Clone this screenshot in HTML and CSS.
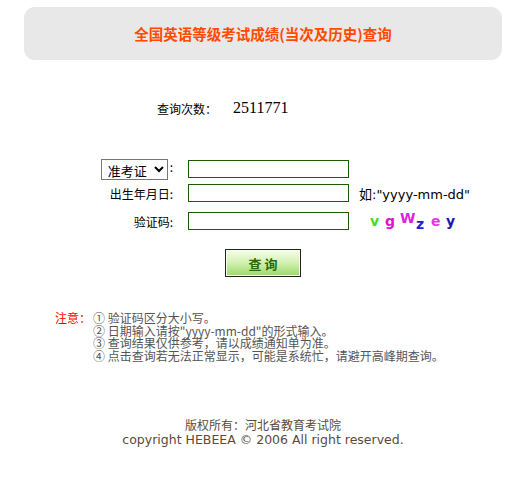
FILE: index.html
```html
<!DOCTYPE html>
<html>
<head>
<meta charset="utf-8">
<link rel="stylesheet" href="styles.css">
</head>
<body>
<div class="page">
  <div class="header">全国英语等级考试成绩(当次及历史)查询</div>
  <div class="count">
    <span class="count-label">查询次数：</span>
    <span class="count-num">2511771</span>
  </div>
  <table class="form">
    <tr class="row1">
      <td class="lab"><select class="sel"><option>准考证</option></select>:</td>
      <td class="inp"><input class="box" type="text"></td>
      <td class="hint"></td>
    </tr>
    <tr class="row2">
      <td class="lab">出生年月日:</td>
      <td class="inp"><input class="box" type="text"></td>
      <td class="hint">如:"yyyy-mm-dd"</td>
    </tr>
    <tr class="row3">
      <td class="lab">验证码:</td>
      <td class="inp"><input class="box" type="text"></td>
      <td class="hint"><span class="captcha"><span class="c1">v</span><span class="c2">g</span><span class="c3">W</span><span class="c4">z</span><span class="c5">e</span><span class="c6">y</span></span></td>
    </tr>
  </table>
  <div class="btnrow"><button class="btn">查 询</button></div>
  <div class="notes">
    <div class="note-head">注意：</div>
    <div class="note-list">
      <div>① 验证码区分大小写。</div>
      <div>② 日期输入请按"yyyy-mm-dd"的形式输入。</div>
      <div>③ 查询结果仅供参考，请以成绩通知单为准。</div>
      <div>④ 点击查询若无法正常显示，可能是系统忙，请避开高峰期查询。</div>
    </div>
  </div>
  <div class="footer">
    <div>版权所有：河北省教育考试院</div>
    <div>copyright HEBEEA © 2006 All right reserved.</div>
  </div>
</div>
</body>
</html>
```
FILE: styles.css
```css
html, body {
  margin: 0;
  padding: 0;
  background: #fff;
}
body {
  font-family: "DejaVu Sans", "Noto Sans CJK SC", sans-serif;
  font-size: 12px;
  color: #000;
}
.page {
  width: 478px;
  margin-left: 24px;
  padding-top: 7px;
}
.header {
  height: 53px;
  background: #e8e8e8;
  border-radius: 11px;
  display: flex;
  align-items: center;
  justify-content: center;
  color: #ff4a00;
  font-family: "Noto Sans CJK SC", sans-serif;
  font-weight: bold;
  font-size: 14.5px;
}
.count {
  margin-top: 38px;
  display: flex;
  align-items: center;
  padding-left: 133px;
  height: 20px;
}
.count-label {
  font-family: "Noto Sans CJK SC", sans-serif;
  font-size: 12px;
  width: 76px;
}
.count-num {
  font-family: "Liberation Serif", serif;
  font-size: 16px;
}
.form {
  margin-top: 39px;
  margin-left: 58px;
  border-collapse: collapse;
}
.form td {
  padding: 0;
}
.lab {
  width: 91px;
  text-align: right;
  font-family: "Noto Sans CJK SC", sans-serif;
  font-size: 12px;
}
.inp {
  padding-left: 15px !important;
  width: 161px;
}
.hint {
  padding-left: 10px !important;
  font-family: "DejaVu Sans", "Noto Sans CJK SC", sans-serif;
  font-size: 13px;
  white-space: nowrap;
}
.row1 { height: 24px; }
.row2 { height: 24px; }
.row3 { height: 32px; }
.sel {
  font-family: "Noto Sans CJK SC", sans-serif;
  font-size: 13px;
  height: 21px;
  width: 67px;
  border: 1px solid #767676;
  border-radius: 0;
  padding: 0 0 0 2px;
  margin: 0 2px 0 0;
  background: #fff;
  color: #000;
  vertical-align: middle;
}
.box {
  box-sizing: border-box;
  width: 161px;
  height: 18px;
  border: 1px solid #1e5a00;
  margin: 0;
  padding: 0;
  vertical-align: middle;
}
.captcha {
  font-family: "DejaVu Sans", sans-serif;
  font-weight: bold;
  font-size: 14px;
  display: inline-flex;
  align-items: center;
  padding-left: 11px;
}
.captcha span {
  display: inline-block;
  width: 15px;
}
.c1 { color: #44dd22; }
.c2 { color: #dd11cc; }
.c3 { color: #dd22dd; transform: translateY(-3px); width: 16px !important; }
.c4 { color: #2222cc; transform: translateY(3px); }
.c5 { color: #ee33ee; }
.c6 { color: #1a1aaa; }
.btnrow {
  margin-top: 12px;
  padding-left: 201px;
}
.btn {
  width: 76px;
  height: 28px;
  border: 1px solid #222;
  box-shadow: inset 0 0 0 1px #f4ffe8;
  background: linear-gradient(#f6fdee 0%, #d6f2b6 45%, #9ad86a 100%);
  font-family: "Noto Sans CJK SC", sans-serif;
  font-weight: bold;
  font-size: 13px;
  color: #2a6a00;
  padding: 0;
  border-radius: 0;
}
.notes {
  margin-top: 35px;
  margin-left: 31px;
  display: flex;
  font-family: "Noto Sans CJK SC", sans-serif;
  font-size: 12px;
  color: #555;
  line-height: 12.7px;
}
.note-head {
  color: #ff0000;
  width: 38px;
}
.footer {
  margin-top: 54px;
  text-align: center;
  color: #5a4a3a;
  font-size: 12.5px;
  line-height: 15px;
}
.footer div:first-child {
  font-family: "Noto Sans CJK SC", sans-serif;
  font-size: 12px;
}
```
